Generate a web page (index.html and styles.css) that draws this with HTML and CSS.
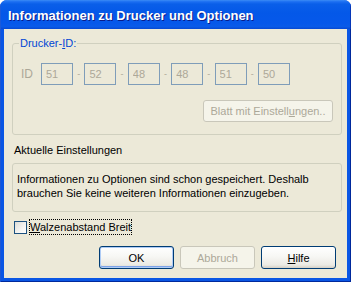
FILE: index.html
```html
<!DOCTYPE html>
<html lang="de">
<head>
    <meta charset="UTF-8">
    <meta name="viewport" content="width=device-width, initial-scale=1.0">
    <title>Informationen zu Drucker und Optionen</title>
    <link rel="stylesheet" href="styles.css">
</head>
<body>
    <div class="window">
        <div class="titlebar">
            <span class="title">Informationen zu Drucker und Optionen</span>
        </div>
        <div class="frame">
            <div class="client">
                <fieldset class="group">
                    <legend>Drucker-<u>I</u>D:</legend>
                    <div class="idRow">
                        <span class="idLabel">ID</span>
                        <input class="idBox" type="text" value="51" disabled>
                        <span class="dash">-</span>
                        <input class="idBox" type="text" value="52" disabled>
                        <span class="dash">-</span>
                        <input class="idBox" type="text" value="48" disabled>
                        <span class="dash">-</span>
                        <input class="idBox" type="text" value="48" disabled>
                        <span class="dash">-</span>
                        <input class="idBox" type="text" value="51" disabled>
                        <span class="dash">-</span>
                        <input class="idBox" type="text" value="50" disabled>
                    </div>
                    <div class="sheetRow">
                        <button class="btn sheetBtn" disabled>Blatt mit Einstell<u>u</u>ngen..</button>
                    </div>
                </fieldset>

                <div class="sectionTitle">Aktuelle Einstellungen</div>
                <div class="infoBox">
                    Informationen zu Optionen sind schon gespeichert. Deshalb<br>
                    brauchen Sie keine weiteren Informationen einzugeben.
                </div>

                <label class="checkRow">
                    <span class="checkBox"></span>
                    <span class="checkText"><u>W</u>alzenabstand Breit</span>
                </label>

                <div class="buttonContainer">
                    <button class="btn defaultBtn">OK</button>
                    <button class="btn" disabled>Abbruch</button>
                    <button class="btn"><u>H</u>ilfe</button>
                </div>
            </div>
        </div>
    </div>
</body>
</html>
```

FILE: styles.css
```css
body {
    margin: 0;
    padding: 0;
    background: #ffffff;
    font-family: 'Liberation Sans', Arial, sans-serif;
    font-size: 11px;
}

.window {
    width: 351px;
    height: 282px;
    display: flex;
    flex-direction: column;
    border-radius: 7px 7px 0 0;
    overflow: hidden;
    background: #0a56e4;
}

.titlebar {
    height: 29px;
    flex: none;
    display: flex;
    align-items: center;
    padding-left: 8px;
    background: linear-gradient(to bottom, #3b8cf5 0%, #1c6ff2 6%, #0a5fe9 14%, #0458e8 45%, #0658ea 80%, #0a5be8 92%, #0748d2 100%);
    box-shadow: inset 1px 0 #1c5ad8, inset -1px 0 #0637b8;
}

.title {
    color: #ffffff;
    font-weight: bold;
    font-size: 13px;
    text-shadow: 1px 1px #0a1c8a;
    padding-top: 1px;
}

.frame {
    flex: 1;
    padding: 0 4px 4px;
    background: #0a56e4;
    box-shadow: inset 1px 0 #1e57d4, inset -1px 0 #00299c, inset 0 -1px #00299c;
    display: flex;
}

.client {
    flex: 1;
    background: #ece9d8;
    display: flex;
    flex-direction: column;
}

.group {
    margin: 8px 0 0 8px;
    width: 330px;
    box-sizing: border-box;
    padding: 13px 8px 12px 8px;
    border: 1px solid #d0d0bf;
    border-radius: 3px;
    min-width: 0;
}

.group legend {
    color: #0046d5;
    padding: 0 1px;
    margin-left: -2px;
    line-height: 13px;
}

.idRow {
    display: flex;
    align-items: center;
    height: 22px;
}

.idLabel {
    width: 20px;
    color: #aca899;
    font-size: 12px;
}

.idBox {
    width: 32px;
    height: 22px;
    box-sizing: border-box;
    margin: 0;
    padding: 0 0 0 4px;
    border: 1px solid #7f9db9;
    background: #ece9d8;
    color: #aca899;
    font-family: 'Liberation Sans', Arial, sans-serif;
    font-size: 11px;
}

.dash {
    width: 11.4px;
    text-align: center;
    color: #aca899;
    font-size: 9px;
}

.sheetRow {
    display: flex;
    justify-content: flex-end;
    margin-top: 15px;
}

.btn {
    width: 75px;
    height: 23px;
    margin: 0;
    padding: 0;
    box-sizing: border-box;
    border: 1px solid #003c74;
    border-radius: 3px;
    background: linear-gradient(to bottom, #ffffff 0%, #f7f7f4 45%, #ebeae4 85%, #d6d0c5 100%);
    font-family: 'Liberation Sans', Arial, sans-serif;
    font-size: 11px;
    color: #000000;
}

.defaultBtn {
    box-shadow: inset 0 0 0 1px #aecbf5, inset 0 -1px 0 1px #7da2e8;
}

.btn:disabled {
    border-color: #c9c7ba;
    background: #f5f4ea;
    color: #aca899;
}

.sheetBtn {
    width: 130px;
    height: 22px;
}

.sectionTitle {
    margin: 9px 0 0 10px;
    line-height: 13px;
}

.infoBox {
    margin: 6px 0 0 8px;
    width: 330px;
    box-sizing: border-box;
    border: 1px solid #d0d0bf;
    border-radius: 3px;
    padding: 8px 4px 11px 4px;
    line-height: 14px;
}

.checkRow {
    display: flex;
    align-items: flex-start;
    margin: 7px 0 0 10px;
    height: 16px;
}

.checkBox {
    width: 13px;
    height: 13px;
    box-sizing: border-box;
    margin-top: 2px;
    border: 1px solid #1c5180;
    background: linear-gradient(135deg, #dcdcd7 0%, #f4f4f2 60%, #ffffff 100%);
}

.checkText {
    margin-left: 2px;
    padding: 0 1px;
    height: 16px;
    line-height: 16px;
    outline: 1px dotted #000000;
    outline-offset: -1px;
}

.buttonContainer {
    display: flex;
    justify-content: flex-end;
    gap: 6px;
    margin-top: 11px;
    padding-right: 11px;
}
```
